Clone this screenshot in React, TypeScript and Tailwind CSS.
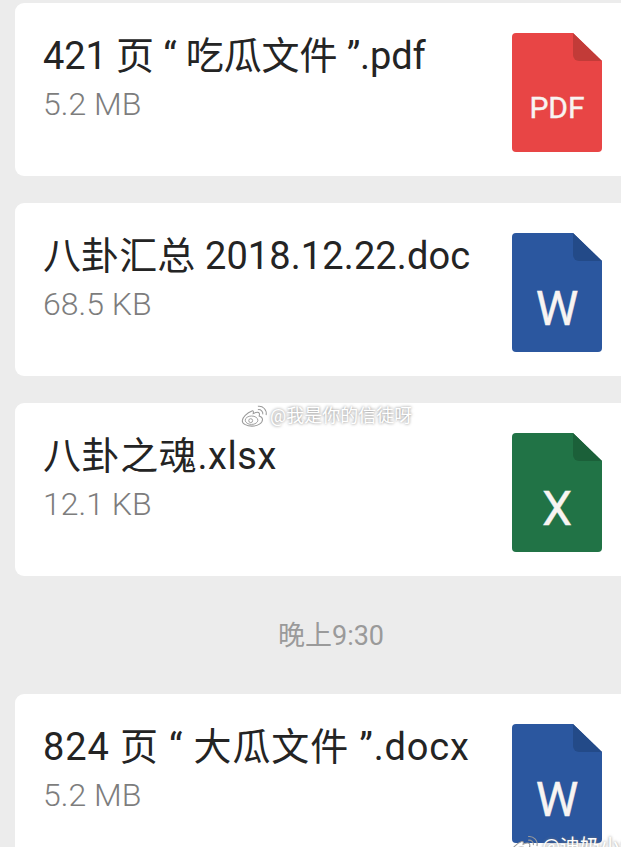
const font = "font-['Roboto','Noto_Sans_CJK_SC',sans-serif]";

function WeiboMark({ className }: { className: string }) {
  return (
    <svg viewBox="0 0 32 26" fill="none" className={className}>
      <path
        d="M13 7C7 9 1.500 15 1.500 18.500C1.500 22.500 7 25 13 25C20 25 25.500 21.500 25.500 17C25.500 14.500 23 13.500 21.500 13C22.500 10 21.500 8.500 19.500 8.500C17.500 8.500 15.500 9.500 14.500 10C15 7.500 14.500 6.500 13 7Z"
        stroke="#9a9a9a"
        strokeWidth="1.200"
        fill="#ffffff"
      />
      <ellipse cx="12.500" cy="18" rx="7.500" ry="5" stroke="#9a9a9a" strokeWidth="1.100" />
      <circle cx="11.500" cy="18.500" r="2.300" stroke="#9a9a9a" strokeWidth="1.100" />
      <path d="M20 5.500C23.500 4.800 26.500 8 25.800 11" stroke="#9a9a9a" strokeWidth="1.200" />
      <path d="M20 1.500C26 0.500 31 6 29.800 12" stroke="#9a9a9a" strokeWidth="1.200" />
    </svg>
  );
}

function FileIcon({ color, fold, label, labelClass }: { color: string; fold: string; label: string; labelClass: string }) {
  return (
    <div className="relative h-[119px] w-[90px] shrink-0">
      <svg viewBox="0 0 90 119" className="block h-full w-full">
        <path
          d="M4 0H61L90 28V115A4 4 0 0 1 86 119H4A4 4 0 0 1 0 115V4A4 4 0 0 1 4 0Z"
          fill={color}
        />
        <path d="M61 0L90 28H67A6 6 0 0 1 61 22Z" fill={fold} />
      </svg>
      <span className={`absolute left-0 right-0 text-center leading-none text-[#f8f4f2] [-webkit-text-stroke:0.4px_#f8f4f2] ${font} ${labelClass}`}>
        {label}
      </span>
    </div>
  );
}

function FileCard({
  name,
  nameClass,
  size,
  color,
  fold,
  label,
  labelClass,
}: {
  name: string;
  nameClass: string;
  size: string;
  color: string;
  fold: string;
  label: string;
  labelClass: string;
}) {
  return (
    <div className="flex h-[173px] items-start justify-between rounded-l-[9px] bg-white pl-[28px] pr-[19px] pt-[29px]">
      <div className={`${font} min-w-0`}>
        <div className={`whitespace-nowrap text-[38px] leading-[48px] text-[#242424] ${nameClass}`}>{name}</div>
        <div className="mt-[2px] text-[32px] font-light leading-[44px] text-[#7d7d7d]">{size}</div>
      </div>
      {/* icon sits 1px lower than the text block's padding */}
      <div className="pt-[1px]">
        <FileIcon color={color} fold={fold} label={label} labelClass={labelClass} />
      </div>
    </div>
  );
}

export default function App() {
  return (
    <div className="relative h-[847px] w-[621px] overflow-hidden bg-[#ececec] pl-[15px] pt-[3px]">
      <div className="flex flex-col gap-[27px]">
        <FileCard
          name="421 页 “ 吃瓜文件 ”.pdf"
          nameClass="tracking-[-0.12px]"
          size="5.2 MB"
          color="#e84545"
          fold="#c23b38"
          label="PDF"
          labelClass="top-[60px] text-[30px]"
        />
        <FileCard
          name="八卦汇总 2018.12.22.doc"
          nameClass="tracking-[0.1px]"
          size="68.5 KB"
          color="#2b579f"
          fold="#234a88"
          label="W"
          labelClass="top-[52px] text-[48px]"
        />
        <FileCard
          name="八卦之魂.xlsx"
          nameClass="tracking-[0.6px]"
          size="12.1 KB"
          color="#217346"
          fold="#1b6039"
          label="X"
          labelClass="top-[52px] text-[48px]"
        />
      </div>
      <div className={`flex h-[118px] items-center justify-center pl-[26px] pt-[2px] text-[27px] text-[#9a9a9a] ${font}`}>
        晚上9:30
      </div>
      <FileCard
        name="824 页 “ 大瓜文件 ”.docx"
        nameClass="tracking-[0.85px]"
        size="5.2 MB"
        color="#2b579f"
        fold="#234a88"
        label="W"
        labelClass="top-[52px] text-[48px]"
      />

      <div className="absolute left-[241px] top-[405px] flex items-center gap-[2px]">
        <WeiboMark className="h-[22px] w-[27px]" />
        <span className={`whitespace-nowrap text-[18px] leading-none text-white [text-shadow:0_0_3px_#777] ${font}`}>@我是你的信徒呀</span>
      </div>
      <div className="absolute left-[510px] top-[835px] flex items-center gap-[3px]">
        <WeiboMark className="h-[24px] w-[29px]" />
        <span className={`whitespace-nowrap text-[20px] leading-none text-white [text-shadow:0_0_3px_#777] ${font}`}>@迪奶小会</span>
      </div>
    </div>
  );
}
